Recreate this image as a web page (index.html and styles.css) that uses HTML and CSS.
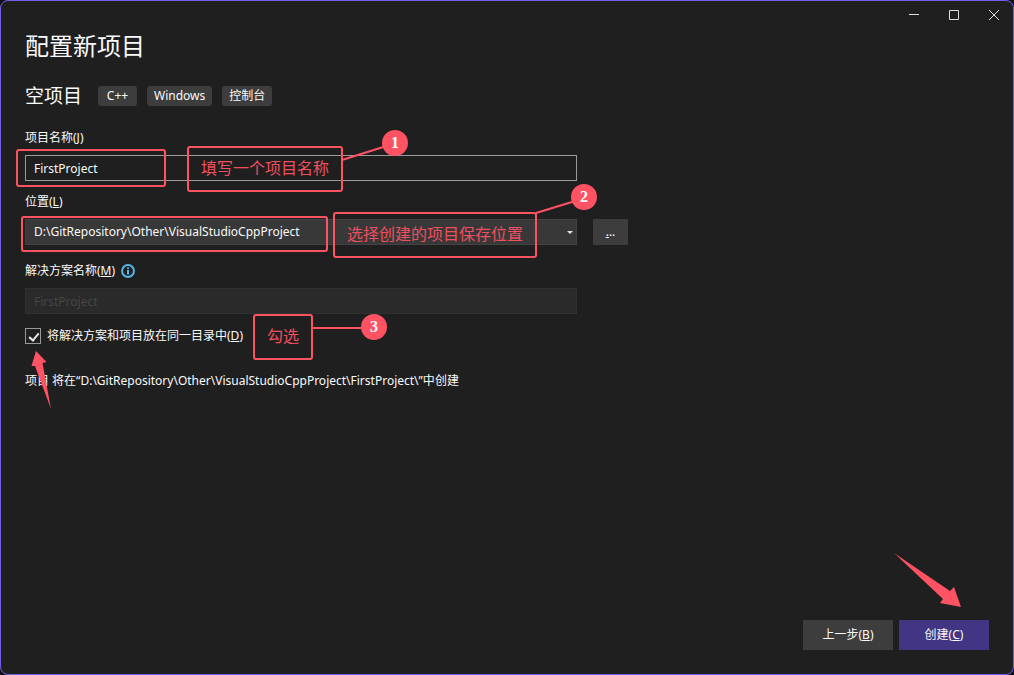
FILE: index.html
```html
<!DOCTYPE html>
<html lang="zh-CN">
<head>
    <meta charset="UTF-8">
    <title>配置新项目</title>
    <link rel="stylesheet" href="styles.css">
</head>
<body>
    <div class="window">
        <!--标题栏-->
        <div class="titlebar">
            <button type="button" aria-label="最小化">
                <svg width="12" height="12" viewBox="0 0 12 12"><path d="M1 5.5h10"/></svg>
            </button>
            <button type="button" aria-label="最大化">
                <svg width="12" height="12" viewBox="0 0 12 12"><path d="M1.5 1.5h9v9h-9z"/></svg>
            </button>
            <button type="button" aria-label="关闭">
                <svg width="12" height="12" viewBox="0 0 12 12"><path d="M1 1l10 10M11 1L1 11"/></svg>
            </button>
        </div>

        <!--表单-->
        <form class="main" id="form">
            <h1>配置新项目</h1>
            <div class="template">
                <h2>空项目</h2>
                <span class="tag">C++</span>
                <span class="tag">Windows</span>
                <span class="tag">控制台</span>
            </div>

            <label class="label" for="name">项目名称(<u>J</u>)</label>
            <input class="field" id="name" type="text" value="FirstProject">

            <label class="label" for="path">位置(<u>L</u>)</label>
            <div class="row">
                <div class="combo">
                    <select class="field" id="path">
                        <option>D:\GitRepository\Other\VisualStudioCppProject</option>
                    </select>
                    <svg class="caret" width="6" height="3" viewBox="0 0 6 3"><path d="M0 0h6L3 3z"/></svg>
                </div>
                <button class="browse" type="button" aria-label="浏览"><u>.</u>..</button>
            </div>

            <div class="label solution">
                <label for="solution">解决方案名称(<u>M</u>)</label>
                <svg width="14" height="14" viewBox="0 0 14 14">
                    <circle cx="7" cy="7" r="5.9"/>
                    <path d="M7 6v4.4M7 3.4v1.6"/>
                </svg>
            </div>
            <input class="field" id="solution" type="text" value="FirstProject" disabled>

            <div class="check">
                <input type="checkbox" id="same" checked>
                <label for="same">将解决方案和项目放在同一目录中(<u>D</u>)</label>
            </div>

            <p>项目 将在“D:\GitRepository\Other\VisualStudioCppProject\FirstProject\”中创建</p>
        </form>

        <!--按钮-->
        <div class="footer">
            <button type="button">上一步(<u>B</u>)</button>
            <button type="submit" form="form" class="primary">创建(<u>C</u>)</button>
        </div>

        <!--标注-->
        <div class="mark mark-name"></div>
        <div class="mark mark-path"></div>
        <div class="note note-name">填写一个项目名称</div>
        <div class="note note-path">选择创建的项目保存位置</div>
        <div class="note note-check">勾选</div>
        <svg class="lines" width="620" height="420" viewBox="0 0 620 420">
            <path class="line" d="M342 160L396 143M536 213L585 198M312 328H374"/>
            <path class="arrow" d="M36 351L46.500 362L42.500 363L51 409L35 366L31.500 366z"/>
        </svg>
        <span class="num num-1">1</span>
        <span class="num num-2">2</span>
        <span class="num num-3">3</span>
        <svg class="arrow-create" width="68" height="54" viewBox="0 0 68 54">
            <path class="arrow" d="M0 0L56 38L60 34L67 54L46 50L49 46z"/>
        </svg>
    </div>
</body>
</html>
```
FILE: styles.css
```css
* {
    box-sizing: border-box;
    margin: 0;
    padding: 0;
}

body {
    background: #101014;
    color: #fafafa;
    font-family: "Noto Sans", "Noto Sans CJK SC", sans-serif;
    font-size: 12px;
    line-height: 16px;
}

button,
input,
select {
    border: 0;
    color: inherit;
    font: inherit;
}

u {
    text-underline-offset: 1px;
}

.window {
    position: relative;
    display: flex;
    flex-direction: column;
    min-height: 100vh;
    background: #1f1f1f;
    border: 1px solid #6f5fe8;
    border-radius: 8px;
}

/*标题栏*/
.titlebar {
    display: flex;
    justify-content: flex-end;
    height: 29px;
}

.titlebar button {
    width: 40px;
    height: 28px;
    background: none;
}

.titlebar svg {
    display: block;
    margin: 0 0 0 15px;
    fill: none;
    stroke: #e0e0e0;
}

/*表单*/
.main {
    flex: 1;
    padding: 0 24px;
}

h1 {
    font-size: 24px;
    font-weight: normal;
    line-height: 32px;
}

.template {
    display: flex;
    align-items: center;
    gap: 10px;
    margin: 20px 0;
}

h2 {
    margin-right: 6px;
    font-size: 19px;
    font-weight: normal;
    line-height: 28px;
}

.tag {
    min-width: 39px;
    height: 20px;
    padding: 0 7px;
    line-height: 20px;
    text-align: center;
    background: #3d3d3d;
    border-radius: 3px;
}

.label {
    display: block;
    margin-bottom: 9px;
}

.field {
    display: block;
    width: 100%;
    max-width: 552px;
    height: 26px;
    margin-bottom: 13px;
    padding: 0 8px;
    background: #1f1f1f;
    border: 1px solid #999;
    border-radius: 0;
    appearance: none;
}

.row {
    display: flex;
    gap: 16px;
    margin-bottom: 18px;
}

.combo {
    position: relative;
    flex: 0 1 552px;
}

.combo .field {
    margin: 0;
    background: #383838;
    border-color: #424242;
}

.caret {
    position: absolute;
    top: 12px;
    right: 4px;
    fill: #e6e6e6;
}

.browse {
    width: 35px;
    height: 26px;
    background: #3d3d3d;
}

.solution {
    display: flex;
    align-items: center;
    gap: 6px;
}

.solution svg {
    fill: none;
    stroke: #55b8e8;
    stroke-width: 2;
}

.field:disabled {
    background: #2a2a2a;
    border-color: #303030;
    color: #464646;
}

.check {
    display: flex;
    align-items: center;
    gap: 6px;
    margin: 14px 0 29px;
}

.check input {
    width: 16px;
    height: 16px;
    border: 1px solid #999;
    appearance: none;
}

.check input:checked::before {
    content: "";
    display: block;
    width: 4px;
    height: 8px;
    margin: 2px 0 0 5px;
    border: solid #e6e6e6;
    border-width: 0 2px 2px 0;
    transform: rotate(40deg);
}

/*按钮*/
.footer {
    display: flex;
    justify-content: flex-end;
    gap: 6px;
    padding: 0 24px 24px;
}

.footer button {
    width: 90px;
    height: 30px;
    background: #3d3d3d;
}

.footer .primary {
    background: #413584;
}

/*标注*/
.mark,
.note,
.num,
.lines,
.arrow-create {
    position: absolute;
    pointer-events: none;
}

.mark,
.note {
    border: 2px solid #ff5263;
    border-radius: 3px;
}

.mark-name {
    top: 148px;
    left: 15px;
    width: 150px;
    height: 38px;
}

.mark-path {
    top: 215px;
    left: 20px;
    width: 307px;
    height: 36px;
}

.note {
    height: 46px;
    padding: 0 12px;
    color: #f04f5f;
    font-size: 16px;
    line-height: 40px;
    white-space: nowrap;
}

.note-name {
    top: 145px;
    left: 186px;
}

.note-path {
    top: 211px;
    left: 332px;
}

.note-check {
    top: 313px;
    left: 252px;
}

.lines {
    top: -1px;
    left: -1px;
}

.line {
    stroke: #ff5263;
    stroke-width: 2;
}

.arrow {
    fill: #ff5263;
}

.num {
    width: 26px;
    height: 26px;
    background: #ff5263;
    border-radius: 50%;
    color: #fff;
    font: bold 16px/26px "Liberation Serif", serif;
    text-align: center;
}

.num-1 {
    top: 129px;
    left: 381px;
}

.num-2 {
    top: 183px;
    left: 570px;
}

.num-3 {
    top: 313px;
    left: 360px;
}

.arrow-create {
    right: 51px;
    bottom: 67px;
}
```
